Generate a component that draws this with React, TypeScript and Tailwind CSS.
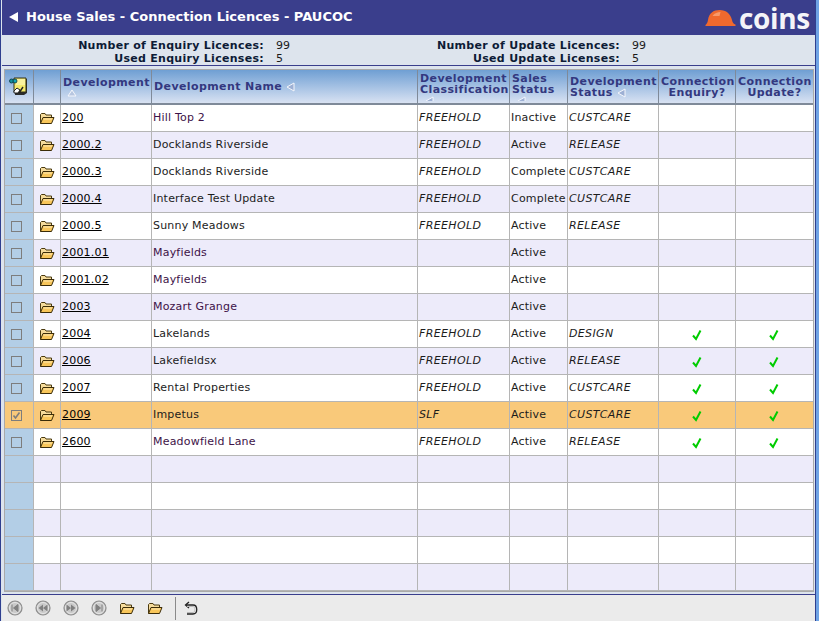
const font = "font-['DejaVu_Sans',sans-serif]";

type Row = {
  code: string;
  name: string;
  nameTone?: boolean;
  cls: string;
  sales: string;
  status: string;
  ticks?: boolean;
  selected?: boolean;
};

const rows: Row[] = [
  { code: "200", name: "Hill Top 2", nameTone: true, cls: "FREEHOLD", sales: "Inactive", status: "CUSTCARE" },
  { code: "2000.2", name: "Docklands Riverside", cls: "FREEHOLD", sales: "Active", status: "RELEASE" },
  { code: "2000.3", name: "Docklands Riverside", cls: "FREEHOLD", sales: "Complete", status: "CUSTCARE" },
  { code: "2000.4", name: "Interface Test Update", cls: "FREEHOLD", sales: "Complete", status: "CUSTCARE" },
  { code: "2000.5", name: "Sunny Meadows", cls: "FREEHOLD", sales: "Active", status: "RELEASE" },
  { code: "2001.01", name: "Mayfields", nameTone: true, cls: "", sales: "Active", status: "" },
  { code: "2001.02", name: "Mayfields", nameTone: true, cls: "", sales: "Active", status: "" },
  { code: "2003", name: "Mozart Grange", nameTone: true, cls: "", sales: "Active", status: "" },
  { code: "2004", name: "Lakelands", cls: "FREEHOLD", sales: "Active", status: "DESIGN", ticks: true },
  { code: "2006", name: "Lakefieldsx", cls: "FREEHOLD", sales: "Active", status: "RELEASE", ticks: true },
  { code: "2007", name: "Rental Properties", cls: "FREEHOLD", sales: "Active", status: "CUSTCARE", ticks: true },
  { code: "2009", name: "Impetus", cls: "SLF", sales: "Active", status: "CUSTCARE", ticks: true, selected: true },
  { code: "2600", name: "Meadowfield Lane", nameTone: true, cls: "FREEHOLD", sales: "Active", status: "RELEASE", ticks: true },
];

// Blank rows that pad the grid out to its full height
const blankRows = 5;

// ── Icons ─────────────────────────────────────────────────────────────────────

function Folder() {
  return (
    <svg width="16" height="13" viewBox="0 0 16 13" className="block">
      <path d="M1.5 11.5 V2.5 L2.5 1.5 H6 L7 3 H12.5 V5" fill="#f6dc9c" stroke="#4a3a10" strokeWidth="1" />
      <path d="M1.5 11.5 L4 5.5 H15 L12.5 11.5 Z" fill="#f8c65a" stroke="#3b2c08" strokeWidth="1" strokeLinejoin="round" />
      <path d="M4.5 7 H13" stroke="#fdeab8" strokeWidth="1" />
    </svg>
  );
}

function Tick() {
  return (
    <svg width="10" height="12" viewBox="0 0 10 12" className="block">
      <path d="M1 6.5 L4 10 L8.5 1.5" fill="none" stroke="#00cc00" strokeWidth="2" />
    </svg>
  );
}

function CheckBox({ checked }: { checked?: boolean }) {
  return (
    <div className="mr-[4px] flex h-[11px] w-[11px] items-center justify-center border border-[#7d7d7d] bg-transparent">
      {checked && (
        <svg width="9" height="9" viewBox="0 0 9 9" className="block">
          <path d="M1.5 4.5 L3.5 7 L7.5 1.5" fill="none" stroke="#7d7d7d" strokeWidth="1.6" />
        </svg>
      )}
    </div>
  );
}

function NotesIcon() {
  return (
    <svg width="20" height="20" viewBox="0 0 20 20" className="block">
      <path d="M6 2 H18 V16 L15 18 H6 Z" fill="#2b2b2b" />
      <path d="M5 1 H17 V15 H5 Z" fill="#f4ea6c" stroke="#30301a" strokeWidth="1" />
      <path d="M7 3 H16 M7 5 H16 M7 7 H16" stroke="#fffbd0" strokeWidth="1" />
      <path d="M5 14 L8 11 L11 13 L9 16 H5 Z" fill="#fff" stroke="#222" strokeWidth="1" />
      <path d="M10 16 L14 10" stroke="#222" strokeWidth="1.4" />
      <circle cx="2.5" cy="4" r="2" fill="#0f8f9c" stroke="#06353c" strokeWidth="0.8" />
      <circle cx="6" cy="4" r="2" fill="#12a7b5" stroke="#06353c" strokeWidth="0.8" />
    </svg>
  );
}

function SortMark() {
  return (
    <svg width="9" height="10" viewBox="0 0 9 10" className="inline-block">
      <path d="M8 1 L1 5 L8 9 Z" fill="#9db0d4" stroke="#f5f7fc" strokeWidth="1" />
    </svg>
  );
}

function SortUp() {
  return (
    <svg width="10" height="8" viewBox="0 0 10 8" className="block">
      <path d="M5 1 L1 7 H9 Z" fill="#b7c6e0" stroke="#f5f7fc" strokeWidth="1" />
    </svg>
  );
}

function NavButton({ kind }: { kind: "first" | "prev" | "next" | "last" }) {
  return (
    <svg width="16" height="16" viewBox="0 0 16 16" className="block">
      <circle cx="8" cy="8" r="7" fill="#c9c9c9" stroke="#8d8d8d" strokeWidth="1.2" />
      <circle cx="8" cy="8" r="5.5" fill="none" stroke="#e6e6e6" strokeWidth="1" />
      {kind === "first" && <path d="M5 4.5 V11.5 M11 4.5 V11.5 L6.5 8 Z" fill="#808080" stroke="#808080" strokeWidth="1" />}
      {kind === "prev" && <path d="M8 4.5 V11.5 L3.5 8 Z M12.5 4.5 V11.5 L8 8 Z" fill="#808080" />}
      {kind === "next" && <path d="M8 4.5 V11.5 L12.5 8 Z M3.5 4.5 V11.5 L8 8 Z" fill="#808080" />}
      {kind === "last" && <path d="M11 4.5 V11.5 M5 4.5 V11.5 L9.5 8 Z" fill="#808080" stroke="#808080" strokeWidth="1" />}
    </svg>
  );
}

function UndoIcon() {
  return (
    <svg width="14" height="15" viewBox="0 0 14 15" className="block">
      <path d="M5 1 L1.5 4 L5 7" fill="none" stroke="#222" strokeWidth="1.3" />
      <path d="M2 4 H9 C14 4 14 13 9 13 H3" fill="none" stroke="#222" strokeWidth="1.3" />
      <path d="M3 5.5 H9 C11.5 5.5 11.5 11.5 9 11.5 H3" fill="none" stroke="#bbb" strokeWidth="1" />
    </svg>
  );
}

function CoinsLogo() {
  return (
    <div className="flex h-[35px] items-center gap-[3px]">
      <svg width="32" height="17" viewBox="0 0 31 17" className="mb-[1px] block">
        <path d="M1 16 C2 15 3 14 3.5 11 C4.5 4 9 1 15 1 C22 1 26 5 27.5 11 C28 13.5 29 15 31 15.5 V17 H1 Z" fill="#f0692e" />
        <path d="M8 7 C10 4 13 3 16 3 L15 7 Z" fill="#f79a6c" />
      </svg>
      <span className="font-['Open_Sans',sans-serif] text-[28px] leading-[34px] font-bold tracking-[-0.3px] text-[#f4f4f8]">
        coins
      </span>
    </div>
  );
}

// ── Layout pieces ─────────────────────────────────────────────────────────────

function LicenceCount({ label, value, labelWidth }: { label: string; value: number; labelWidth: string }) {
  return (
    <div className="flex h-[13px] items-center leading-[13px]">
      <span className={`${labelWidth} text-right font-bold tracking-[0.29px] text-[#0d1b36]`}>{label}:</span>
      <span className="ml-3 text-[#1a1a1a]">{value}</span>
    </div>
  );
}

const headClass =
  "border-r border-b-2 border-[#7f8a99] px-[2px] align-middle text-[11px] leading-[11px] font-bold tracking-[0.4px] text-[#33387f]";
const cellClass =
  "border-r border-b border-[#b5b5b5] pt-px pr-[2px] pl-px align-middle text-[11px] tracking-[0.2px] whitespace-nowrap text-[#1c1c1c]";

export default function App() {
  return (
    <div className={`${font} flex h-[621px] w-[819px] overflow-hidden bg-[#6fa3e4]`}>
      <div className="flex h-full w-[816px] flex-col border-x border-[#2f3f8f] bg-[#dde4ed] pl-px">
        {/* Title bar */}
        <div className="flex h-[35px] shrink-0 items-center justify-between bg-[#3a3e8c] pr-[5px] pl-[6px]">
          <div className="mb-[2px] flex items-center gap-[7px]">
            <svg width="11" height="12" viewBox="0 0 11 12" className="block">
              <path d="M10 1 V11 L1 6 Z" fill="#fff" />
            </svg>
            <span className="text-[13px] font-bold text-white">House Sales - Connection Licences - PAUCOC</span>
          </div>
          <CoinsLogo />
        </div>

        {/* Licence counts */}
        <div className="flex h-[31px] shrink-0 items-start border-b border-[#3a3e8c] pt-[4px] text-[11px]">
          <div className="ml-[73px] w-[354px]">
            <LicenceCount label="Number of Enquiry Licences" value={99} labelWidth="w-[189px]" />
            <LicenceCount label="Used Enquiry Licenses" value={5} labelWidth="w-[189px]" />
          </div>
          <div>
            <LicenceCount label="Number of Update Licences" value={99} labelWidth="w-[191px]" />
            <LicenceCount label="Used Update Licenses" value={5} labelWidth="w-[191px]" />
          </div>
        </div>

        {/* Grid */}
        <div className="min-h-0 flex-1 pt-[3px] pr-px pl-[2px]">
          <table className="w-[810px] table-fixed border-separate border-spacing-0 border border-[#a9a9a9]">
            <colgroup>
              <col className="w-[29px]" />
              <col className="w-[27px]" />
              <col className="w-[91px]" />
              <col className="w-[266px]" />
              <col className="w-[92px]" />
              <col className="w-[58px]" />
              <col className="w-[91px]" />
              <col className="w-[77px]" />
              <col className="w-[77px]" />
            </colgroup>
            <thead>
              <tr className="h-[35px] bg-gradient-to-b from-[#6f9fd3] to-[#dfe6f4]">
                <th className={headClass}>
                  <div className="flex justify-center">
                    <NotesIcon />
                  </div>
                </th>
                <th className={headClass} />
                <th className={`${headClass} text-left`}>
                  <div>Development</div>
                  <div className="mt-px ml-[4px]">
                    <SortUp />
                  </div>
                </th>
                <th className={`${headClass} text-left`}>
                  Development Name <SortMark />
                </th>
                <th className={`${headClass} text-left`}>
                  Development Classification
                  <div className="ml-[5px] h-[6px] overflow-hidden">
                    <SortMark />
                  </div>
                </th>
                <th className={`${headClass} text-left`}>
                  Sales Status
                  <div className="ml-[5px] h-[6px] overflow-hidden">
                    <SortMark />
                  </div>
                </th>
                <th className={`${headClass} text-left`}>
                  Development Status <SortMark />
                </th>
                <th className={`${headClass} text-center`}>Connection Enquiry?</th>
                <th className={`${headClass} border-r-0 text-center`}>Connection Update?</th>
              </tr>
            </thead>
            <tbody>
              {rows.map((r, i) => (
                <tr key={r.code} className={`h-[27px] ${r.selected ? "bg-[#f9c97a]" : i % 2 === 0 ? "bg-white" : "bg-[#edebfa]"}`}>
                  <td className={`${cellClass} ${r.selected ? "" : "bg-[#b3cee6]"}`}>
                    <div className="flex justify-center">
                      <CheckBox checked={r.selected} />
                    </div>
                  </td>
                  <td className={cellClass}>
                    <div className="flex justify-center">
                      <Folder />
                    </div>
                  </td>
                  <td className={`${cellClass} text-black underline`}>{r.code}</td>
                  <td className={`${cellClass} ${r.nameTone ? "text-[#3d1248]" : ""}`}>{r.name}</td>
                  <td className={`${cellClass} tracking-[0.35px] italic`}>{r.cls}</td>
                  <td className={cellClass}>{r.sales}</td>
                  <td className={`${cellClass} tracking-[0.35px] italic`}>{r.status}</td>
                  <td className={cellClass}>
                    {r.ticks && (
                      <div className="flex justify-center">
                        <Tick />
                      </div>
                    )}
                  </td>
                  <td className={`${cellClass} border-r-0`}>
                    {r.ticks && (
                      <div className="flex justify-center">
                        <Tick />
                      </div>
                    )}
                  </td>
                </tr>
              ))}
              {Array.from({ length: blankRows }).map((_, i) => (
                <tr key={i} className={`h-[27px] ${i % 2 === 0 ? "bg-[#edebfa]" : "bg-white"}`}>
                  <td className={`${cellClass} bg-[#b3cee6]`} />
                  <td className={cellClass} />
                  <td className={cellClass} />
                  <td className={cellClass} />
                  <td className={cellClass} />
                  <td className={cellClass} />
                  <td className={cellClass} />
                  <td className={cellClass} />
                  <td className={`${cellClass} border-r-0`} />
                </tr>
              ))}
            </tbody>
          </table>
        </div>

        {/* Bottom toolbar */}
        <div className="flex h-[27px] shrink-0 items-center gap-3 border-t border-[#3a3e8c] bg-[#ebebeb] pl-[5px]">
          <NavButton kind="first" />
          <NavButton kind="prev" />
          <NavButton kind="next" />
          <NavButton kind="last" />
          <Folder />
          <Folder />
          <div className="h-[23px] w-px bg-[#8a8a8a]" />
          <div className="-ml-1">
            <UndoIcon />
          </div>
        </div>
      </div>
    </div>
  );
}
